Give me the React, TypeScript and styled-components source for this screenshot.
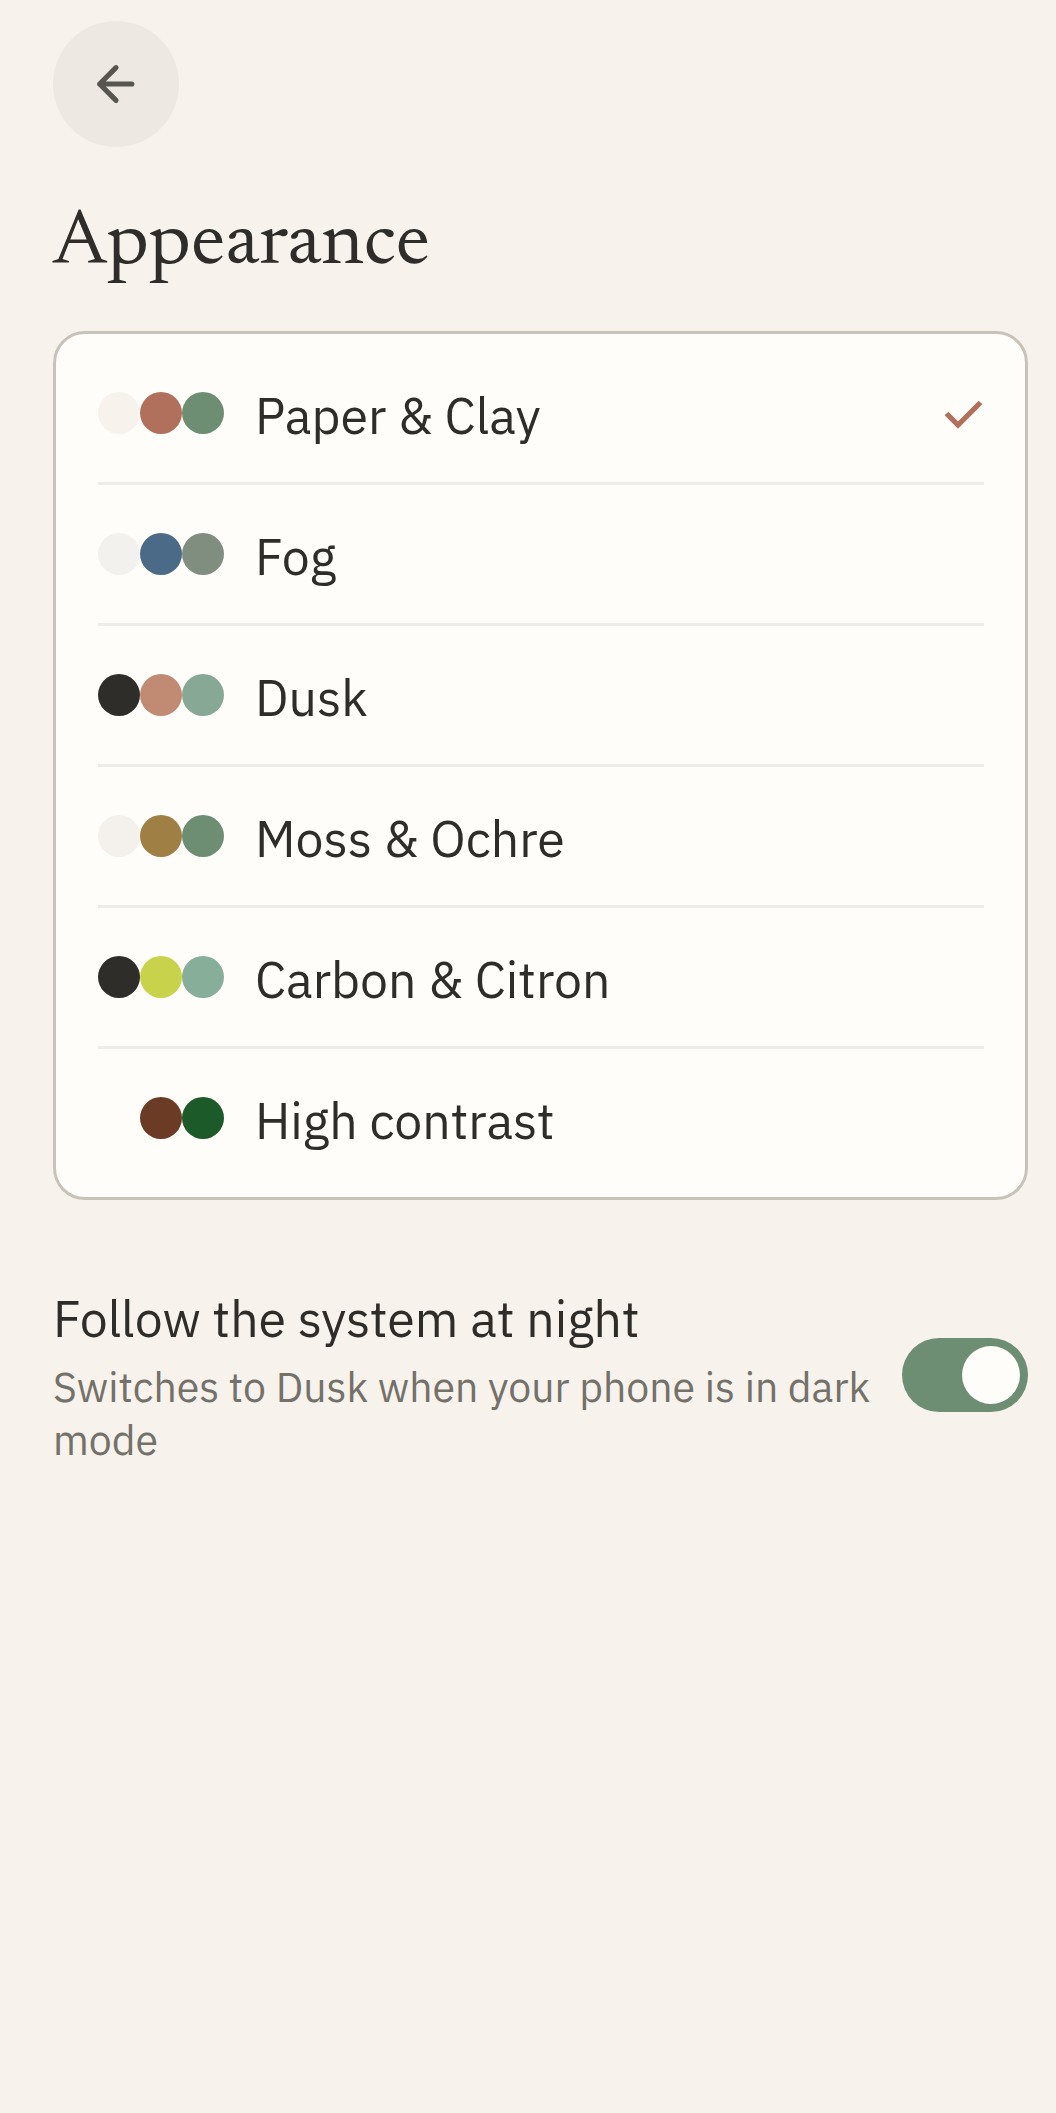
import { useState } from "react";
import styled, { createGlobalStyle, ThemeProvider } from "styled-components";

const theme = {
  paper: "#f7f2ec",
  card: "#fffdf9",
  ink: "#2e2d29",
  muted: "#73716a",
  icon: "#57554f",
  clay: "#b1705c",
  sage: "#6e8e74",
  outline: "#c8c2b8",
  divider: "#eeedea",
  button: "#ede8e2",
  sans: '"IBM Plex Sans", "Noto Sans", "Open Sans", sans-serif',
  serif: '"Newsreader", "Liberation Serif", serif',
};

const GlobalStyle = createGlobalStyle`
  *, *::before, *::after { box-sizing: border-box; }
  body {
    margin: 0;
    background: ${theme.paper};
    color: ${theme.ink};
    font-family: ${theme.sans};
  }
`;

const Page = styled.main`
  min-height: 100vh;
  padding: 21px 28px 64px 53px;
`;

const BackButton = styled.button`
  display: flex;
  align-items: center;
  justify-content: center;
  width: 126px;
  height: 126px;
  padding: 0;
  border: 0;
  border-radius: 50%;
  background: ${(p) => p.theme.button};
  color: ${(p) => p.theme.icon};
  cursor: pointer;
`;

const Title = styled.h1`
  margin: 48px 0 0;
  font: 400 78px/100px ${(p) => p.theme.serif};
`;

const ThemeList = styled.fieldset`
  margin: 36px 0 0;
  padding: 10px 41px 10px 42px;
  min-width: 0;
  border: 3px solid ${(p) => p.theme.outline};
  border-radius: 32px;
  background: ${(p) => p.theme.card};
`;

const HiddenInput = styled.input`
  position: absolute;
  width: 1px;
  height: 1px;
  margin: 0;
  opacity: 0;
`;

const ThemeRow = styled.label`
  display: flex;
  align-items: center;
  gap: 31px;
  min-height: 138px;
  cursor: pointer;

  & + & {
    min-height: 141px;
    border-top: 3px solid ${(p) => p.theme.divider};
  }
`;

const Swatches = styled.span`
  display: flex;
  flex: none;
`;

const Swatch = styled.span<{ $color: string }>`
  width: 42px;
  height: 42px;
  border-radius: 50%;
  background: ${(p) => p.$color};
`;

const ThemeName = styled.span`
  flex: 1;
  padding-top: 6px;
  font-size: 50px;
  line-height: 68px;
`;

const SettingRow = styled.div`
  display: flex;
  align-items: center;
  gap: 28px;
  margin-top: 84px;
`;

const SettingText = styled.label`
  display: grid;
  flex: 1;
  gap: 6px;
  min-width: 0;
`;

const SettingName = styled.span`
  font-size: 50px;
  line-height: 70px;
`;

const SettingHint = styled.span`
  color: ${(p) => p.theme.muted};
  font-size: 41px;
  line-height: 53px;
`;

const Toggle = styled.input`
  appearance: none;
  flex: none;
  display: flex;
  align-items: center;
  width: 126px;
  height: 74px;
  margin: 0;
  padding: 0 8px;
  border-radius: 37px;
  background: ${(p) => p.theme.outline};
  cursor: pointer;

  &::before {
    content: "";
    width: 58px;
    height: 58px;
    border-radius: 50%;
    background: ${(p) => p.theme.card};
  }

  &:checked {
    justify-content: flex-end;
    background: ${(p) => p.theme.sage};
  }
`;

const ArrowIcon = () => (
  <svg width="56" height="56" viewBox="0 0 24 24" fill="none" stroke="currentColor" strokeWidth="2.2" strokeLinecap="round" strokeLinejoin="round" aria-hidden="true">
    <path d="M18.8 12H5M12 5l-7 7 7 7" />
  </svg>
);

const CheckIcon = () => (
  <svg width="42" height="42" viewBox="0 0 42 42" fill="none" stroke={theme.clay} strokeWidth="5.3" aria-hidden="true">
    <path d="M4.5 21.5 16 33 38.5 10.5" />
  </svg>
);

const palettes = [
  { name: "Paper & Clay", colors: ["#f7f2ec", "#b1705c", "#6e8e74"] },
  { name: "Fog", colors: ["#f3f1ed", "#4a6a88", "#808e80"] },
  { name: "Dusk", colors: ["#2e2d29", "#c18b73", "#86a895"] },
  { name: "Moss & Ochre", colors: ["#f4f1ec", "#a07f45", "#6e8e74"] },
  { name: "Carbon & Citron", colors: ["#2e2d29", "#c9d24b", "#86ae98"] },
  { name: "High contrast", colors: ["#fffdf9", "#6b3b26", "#1c5a2a"] },
];

export default function App() {
  const [selected, setSelected] = useState("Paper & Clay");
  const [followSystem, setFollowSystem] = useState(true);

  return (
    <ThemeProvider theme={theme}>
      <GlobalStyle />
      <Page>
        <BackButton type="button" aria-label="Back">
          <ArrowIcon />
        </BackButton>
        <Title id="page-title">Appearance</Title>
        <ThemeList aria-labelledby="page-title">
          {palettes.map(({ name, colors }) => (
            <ThemeRow key={name}>
              <HiddenInput type="radio" name="palette" value={name} checked={selected === name} onChange={() => setSelected(name)} />
              <Swatches>
                {colors.map((color) => (
                  <Swatch key={color} $color={color} />
                ))}
              </Swatches>
              <ThemeName>{name}</ThemeName>
              {selected === name && <CheckIcon />}
            </ThemeRow>
          ))}
        </ThemeList>
        <SettingRow>
          <SettingText htmlFor="follow-system">
            <SettingName>Follow the system at night</SettingName>
            <SettingHint>Switches to Dusk when your phone is in dark mode</SettingHint>
          </SettingText>
          <Toggle id="follow-system" type="checkbox" role="switch" checked={followSystem} onChange={(e) => setFollowSystem(e.target.checked)} />
        </SettingRow>
      </Page>
    </ThemeProvider>
  );
}
